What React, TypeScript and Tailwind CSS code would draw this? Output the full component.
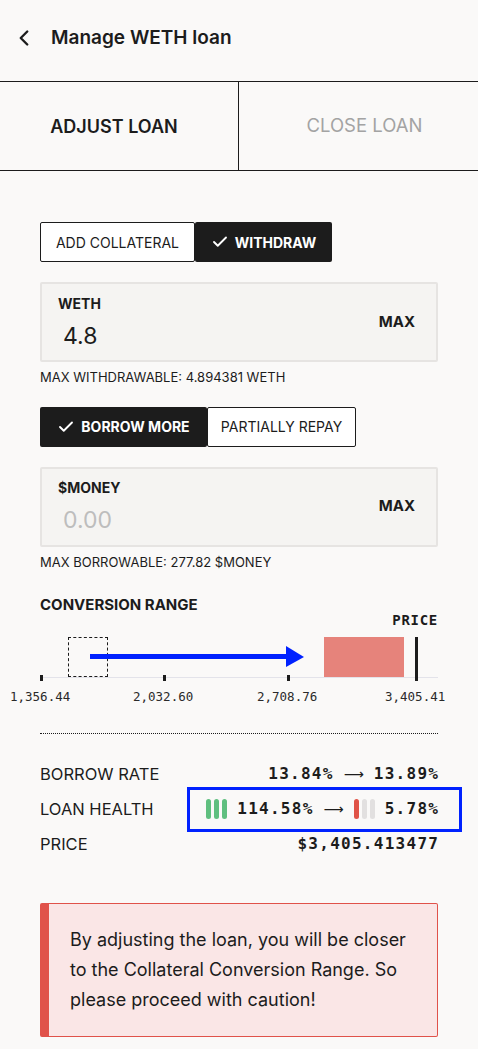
import React from 'react';
import { ChevronLeft, Check } from 'lucide-react';

const sans = { fontFamily: 'Inter, "Liberation Sans", sans-serif' };
const mono = { fontFamily: '"DejaVu Sans Mono", "Liberation Mono", monospace' };

const HealthBars: React.FC<{ level: number; color: string }> = ({ level, color }) => (
    <span className="flex items-center gap-[3px]">
        {[0, 1, 2].map((i) => (
            <span
                key={i}
                className="block w-[5px] h-[20px] rounded-full"
                style={{ backgroundColor: i < level ? color : '#e2e0e0' }}
            />
        ))}
    </span>
);

const Arrow = () => (
    <span className="font-normal text-[14px] tracking-normal" style={{ fontFamily: '"DejaVu Sans", sans-serif' }}>⟶</span>
);

const AmountBox: React.FC<{ label: string; value: string; placeholder?: boolean }> = ({ label, value, placeholder }) => (
    <div className="mt-5 h-[80px] border-2 border-[#e6e4e2] bg-[#f5f4f2] rounded-[2px] flex items-center justify-between pl-[16px] pr-[21px]">
        <div className="flex flex-col">
            <span className="text-[14px] font-bold text-[#1c1c1c] leading-none">{label}</span>
            <span className={`text-[23px] leading-none mt-[14px] pl-[5px] ${placeholder ? 'text-[#bdbdbd]' : 'text-[#1c1c1c]'}`}>{value}</span>
        </div>
        <span className="text-[15px] font-bold text-[#1c1c1c]">MAX</span>
    </div>
);

const Toggle: React.FC<{ items: { label: string; active: boolean; w: string }[] }> = ({ items }) => (
    <div className="flex">
        {items.map((it) => (
            <div
                key={it.label}
                className={`h-[40px] flex items-center justify-center text-[14px] rounded-[2px] ${it.w} ${
                    it.active ? 'bg-[#1c1c1c] text-white font-bold gap-[6px]' : 'bg-white border border-[#1c1c1c] text-[#1c1c1c]'
                }`}
            >
                {it.active && <Check size={18} strokeWidth={2.5} />}
                <span>{it.label}</span>
            </div>
        ))}
    </div>
);

export default function App() {
    return (
        <div className="w-[478px] min-h-[1049px] bg-[#faf9f8] text-[#1c1c1c]" style={sans}>
            {/* header */}
            <div className="h-[82px] flex items-center pl-[11px] pb-[5px] gap-[14px] border-b border-[#1c1c1c]">
                <ChevronLeft size={26} strokeWidth={2.2} />
                <h1 className="text-[19px] font-semibold">Manage WETH loan</h1>
            </div>

            {/* tabs */}
            <div className="grid grid-cols-[239px_1fr] h-[89px] border-b border-[#1c1c1c]">
                <div className="flex items-center justify-center pr-[10px] border-r border-[#1c1c1c] text-[18px] font-semibold">ADJUST LOAN</div>
                <div className="flex items-center justify-center pl-[12px] text-[18.5px] text-[#a3a3a3]">CLOSE LOAN</div>
            </div>

            <div className="px-[40px] pt-[51px] pb-[16px]">
                <Toggle
                    items={[
                        { label: 'ADD COLLATERAL', active: false, w: 'w-[155px]' },
                        { label: 'WITHDRAW', active: true, w: 'w-[137px]' },
                    ]}
                />
                <AmountBox label="WETH" value="4.8" />
                <p className="text-[13px] mt-[6px]">MAX WITHDRAWABLE: 4.894381 WETH</p>

                <div className="mt-[19px]">
                    <Toggle
                        items={[
                            { label: 'BORROW MORE', active: true, w: 'w-[167px]' },
                            { label: 'PARTIALLY REPAY', active: false, w: 'w-[149px]' },
                        ]}
                    />
                </div>
                <AmountBox label="$MONEY" value="0.00" placeholder />
                <p className="text-[13px] mt-[6px]">MAX BORROWABLE: 277.82 $MONEY</p>

                {/* conversion range */}
                <h2 className="text-[15px] font-bold mt-[22px]">CONVERSION RANGE</h2>
                <div className="flex justify-end mt-[-7px]">
                    <span className="text-[14px] font-bold tracking-[0.05em]" style={mono}>PRICE</span>
                </div>
                <div className="relative h-[41px] mt-[6px] border-b border-[#e3e3ea]">
                    <div className="absolute left-[28px] top-0 w-[40px] h-[40px] border border-dashed border-[#1c1c1c]" />
                    <svg className="absolute left-[50px] top-[9px]" width="216" height="22" viewBox="0 0 216 22">
                        <rect x="0" y="8" width="198" height="5" fill="#0022ff" />
                        <polygon points="196,0 214,11 196,21" fill="#0022ff" />
                    </svg>
                    <div className="absolute left-[284px] top-0 w-[80px] h-[40px] bg-[#e6837b]" />
                    <div className="absolute left-[375px] top-0 w-[3px] h-[44px] bg-[#1c1c1c]" />
                    <div className="absolute left-0 top-[38px] w-[3px] h-[6px] bg-[#1c1c1c]" />
                    <div className="absolute left-[123px] top-[38px] w-[3px] h-[6px] bg-[#1c1c1c]" />
                    <div className="absolute left-[247px] top-[38px] w-[3px] h-[6px] bg-[#1c1c1c]" />
                </div>
                <div className="relative h-[24px] text-[12.5px] text-[#2a2a2a]" style={mono}>
                    <span className="absolute left-[-30px] top-[10px]">1,356.44</span>
                    <span className="absolute left-[93px] top-[10px]">2,032.60</span>
                    <span className="absolute left-[217px] top-[10px]">2,708.76</span>
                    <span className="absolute left-[345px] top-[10px]">3,405.41</span>
                </div>

                <div className="mt-[31px] border-t border-dotted border-[#1c1c1c]" />

                {/* stats */}
                <div className="mt-[29px] flex flex-col gap-[12px] text-[16.5px]">
                    <div className="flex justify-between items-center h-[23px]">
                        <span>BORROW RATE</span>
                        <span className="flex items-center gap-[10px] text-[16px] font-bold tracking-[0.08em]" style={mono}>
                            <span>13.84%</span>
                            <Arrow />
                            <span className="mr-[-0.08em]">13.89%</span>
                        </span>
                    </div>
                    <div className="relative flex justify-between items-center h-[23px]">
                        <span>LOAN HEALTH</span>
                        <span className="flex items-center gap-[10px] text-[16px] font-bold tracking-[0.08em]" style={mono}>
                            <HealthBars level={3} color="#5fbf7f" />
                            <span>114.58%</span>
                            <Arrow />
                            <HealthBars level={1} color="#e05347" />
                            <span className="mr-[-0.08em]">5.78%</span>
                        </span>
                        <div className="absolute left-[147px] right-[-24px] top-[-11px] bottom-[-11px] border-[3px] border-[#0022ff]" />
                    </div>
                    <div className="flex justify-between items-center h-[23px]">
                        <span>PRICE</span>
                        <span className="text-[16px] font-bold tracking-[0.08em] mr-[-0.08em]" style={mono}>$3,405.413477</span>
                    </div>
                </div>

                {/* warning */}
                <div className="mt-[47px] bg-[#fae6e6] border border-[#e0524a] border-l-[9px] rounded-[2px] pl-[21px] pr-[12px] py-[21px]">
                    <p className="text-[18px] leading-[30px] text-[#1c1c1c]">
                        By adjusting the loan, you will be closer to the Collateral Conversion Range. So please proceed with caution!
                    </p>
                </div>
            </div>
        </div>
    );
}
